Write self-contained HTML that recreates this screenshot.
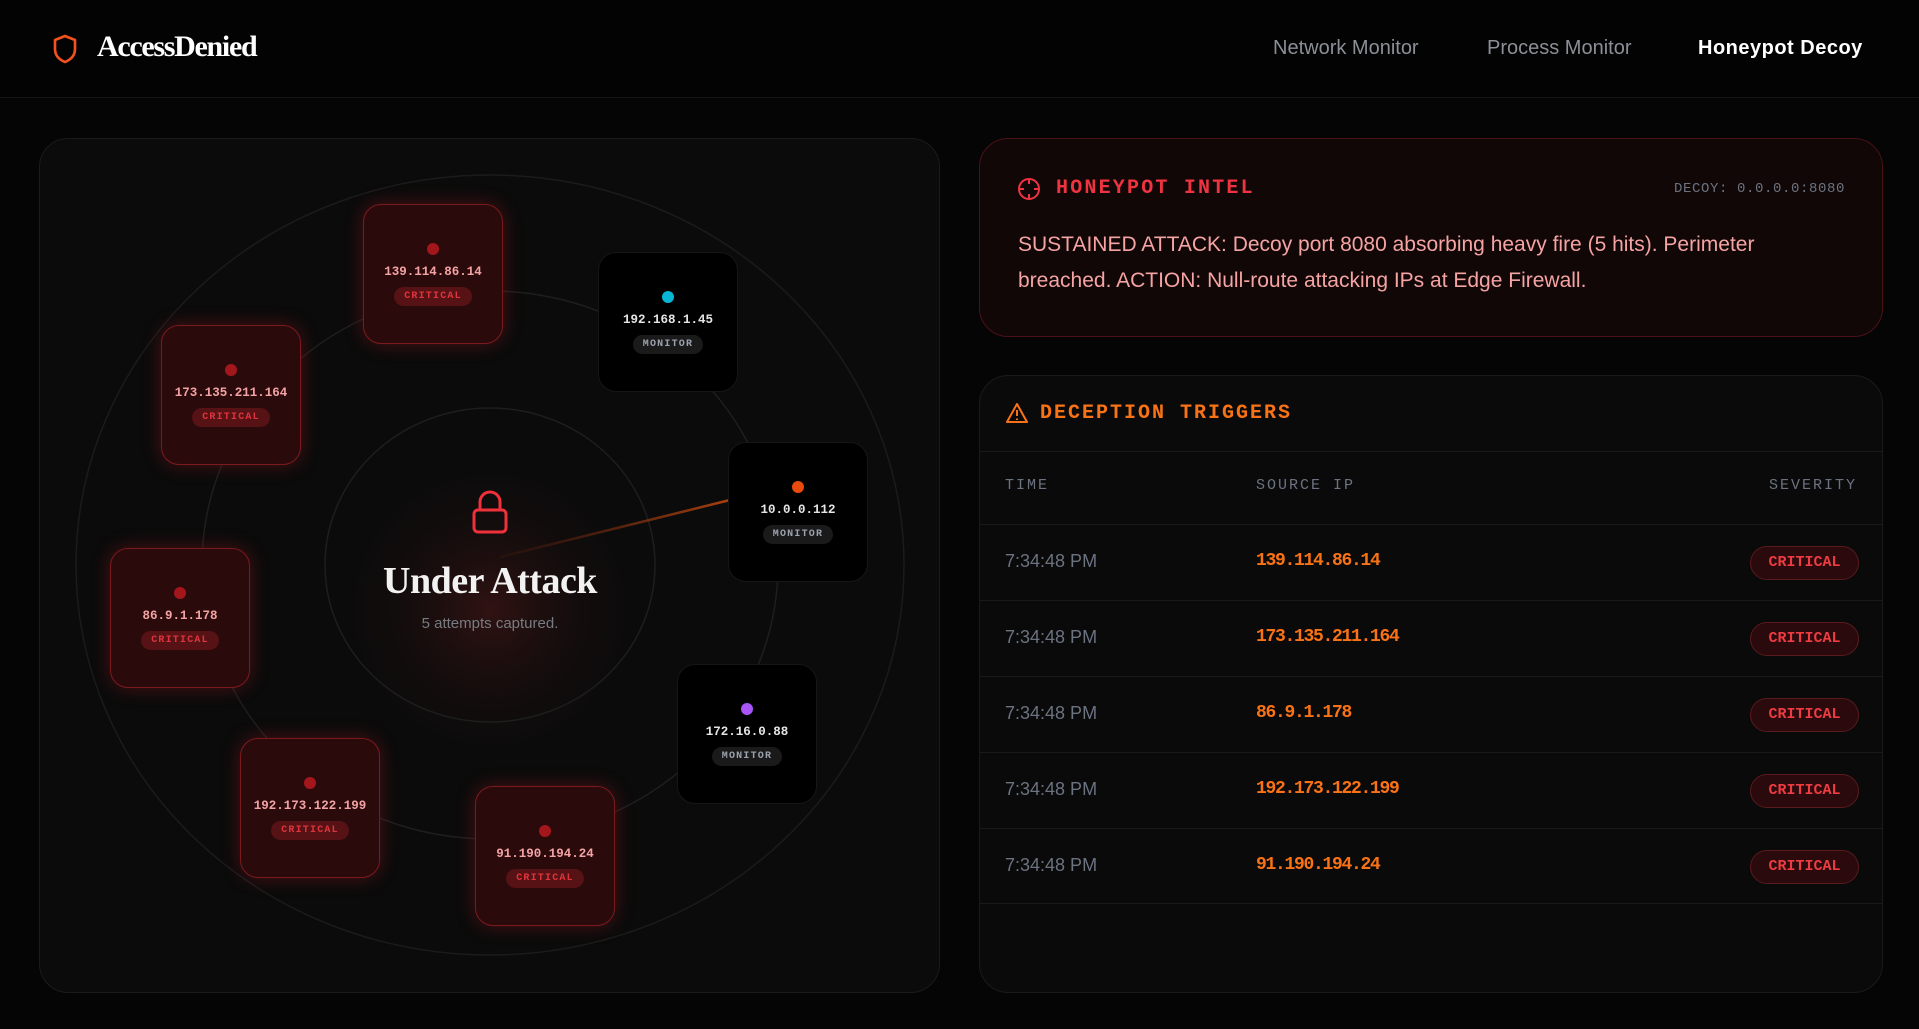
<!DOCTYPE html>
<html><head><meta charset="utf-8"><style>
*{margin:0;padding:0;box-sizing:border-box}
body{width:1919px;height:1029px;background:#050505;overflow:hidden;position:relative;font-family:"Liberation Sans",sans-serif;color:#fff}
.abs{position:absolute}
.mono{font-family:"Liberation Mono",monospace}
.hdr{left:0;top:0;width:1919px;height:98px;border-bottom:1px solid #161616;background:#030303}
.nav{top:37px;font-size:20px;color:#8b8f96}
.panel{left:39px;top:138px;width:901px;height:855px;background:#0b0b0b;border:1px solid #1b1b1b;border-radius:29px}
.node{position:absolute;width:140px;height:140px;border-radius:18px;text-align:center}
.crit{background:#2b0a0c;border:1.5px solid #7a1a1e;box-shadow:0 0 18px rgba(200,30,40,.35)}
.mon{background:#000;border:1px solid #161616}
.node .dot{width:12px;height:12px;border-radius:50%;margin:38px auto 0}
.node .ip{font-family:"Liberation Mono",monospace;font-weight:bold;font-size:12.5px;margin-top:10px}
.crit .ip{color:#f3a3a3}.mon .ip{color:#e5e5e5}
.node .bd{display:inline-block;margin-top:8px;font-family:"Liberation Mono",monospace;font-weight:bold;font-size:10px;letter-spacing:1.2px;padding:4px 10px;border-radius:10px}
.crit .bd{background:#561215;color:#e0343c}
.mon .bd{background:#1a1a1a;color:#9ca3af}
.card1{left:979px;top:138px;width:904px;height:199px;background:#110707;border:1px solid #4a1216;border-radius:29px}
.card2{left:979px;top:375px;width:904px;height:618px;background:#0a0a0a;border:1px solid #1a1a1a;border-radius:29px;overflow:hidden}
.row{position:absolute;left:0;width:904px;height:76px;border-top:1px solid #1a1a1a}
.row .t{position:absolute;left:25px;top:26px;font-size:18px;color:#6b7280}
.row .i{position:absolute;left:276px;top:26px;font-family:"Liberation Mono",monospace;font-weight:bold;font-size:18px;letter-spacing:-1.3px;color:#f97316}
.row .b{position:absolute;right:25px;top:21px;width:109px;height:34px;border-radius:17px;background:#2a0a0c;border:1px solid #5a1a1e;color:#ef3b42;font-family:"Liberation Mono",monospace;font-weight:bold;font-size:15px;text-align:center;line-height:32px}
</style></head><body>
<div class="abs hdr"></div>
<svg class="abs" style="left:52px;top:34px" width="26" height="30" viewBox="0 0 26 30"><path d="M13 2 L23 6 V15 C23 22 18 26 13 28 C8 26 3 22 3 15 V6 Z" fill="none" stroke="#f4511e" stroke-width="2.6" stroke-linejoin="round"/></svg>
<div class="abs" style="left:97px;top:30px;font-family:'Liberation Serif',serif;font-weight:bold;font-size:30px;letter-spacing:-1.3px;color:#fff">AccessDenied</div>
<div class="abs nav" style="left:1273px">Network Monitor</div>
<div class="abs nav" style="left:1487px">Process Monitor</div>
<div class="abs nav" style="left:1698px;color:#fff;font-weight:bold;letter-spacing:.5px">Honeypot Decoy</div>

<div class="abs panel"></div>
<svg class="abs" style="left:0;top:0" width="960" height="1029">
<defs>
<radialGradient id="g" cx="490" cy="610" r="170" gradientUnits="userSpaceOnUse"><stop offset="0" stop-color="#3a1414" stop-opacity=".8"/><stop offset="1" stop-color="#0b0b0b" stop-opacity="0"/></radialGradient>
<linearGradient id="l" x1="500" y1="557" x2="730" y2="500" gradientUnits="userSpaceOnUse"><stop offset="0" stop-color="#7a2a10" stop-opacity=".1"/><stop offset="1" stop-color="#a8400f"/></linearGradient>
</defs>
<ellipse cx="490" cy="565" rx="414" ry="390" fill="none" stroke="#1b1b1b" stroke-width="1.5"/>
<ellipse cx="490" cy="565" rx="288" ry="274" fill="none" stroke="#1e1e1e" stroke-width="1.5"/>
<circle cx="490" cy="610" r="170" fill="url(#g)"/>
<ellipse cx="490" cy="565" rx="165" ry="157" fill="none" stroke="#1e1e1e" stroke-width="1.5"/>
<line x1="500" y1="557" x2="730" y2="500" stroke="url(#l)" stroke-width="2.5"/>
<rect x="474" y="510" width="32" height="22" rx="4" fill="none" stroke="#f0303a" stroke-width="3"/>
<path d="M480 510 V502 A10 10 0 0 1 500 502 V510" fill="none" stroke="#f0303a" stroke-width="3"/>
</svg>
<div class="abs" style="left:290px;top:559px;width:400px;text-align:center;font-family:'Liberation Serif',serif;font-weight:bold;font-size:38px;color:#f2f2f2;letter-spacing:-.5px">Under Attack</div>
<div class="abs" style="left:290px;top:615px;width:400px;text-align:center;font-size:15px;color:#777b82">5 attempts captured.</div>

<div class="node crit" style="left:363px;top:204px"><div class="dot" style="background:#a3161c"></div><div class="ip">139.114.86.14</div><div class="bd">CRITICAL</div></div>
<div class="node mon" style="left:598px;top:252px"><div class="dot" style="background:#06b6d4"></div><div class="ip">192.168.1.45</div><div class="bd">MONITOR</div></div>
<div class="node mon" style="left:728px;top:442px"><div class="dot" style="background:#ea4a0c"></div><div class="ip">10.0.0.112</div><div class="bd">MONITOR</div></div>
<div class="node mon" style="left:677px;top:664px"><div class="dot" style="background:#a855f7"></div><div class="ip">172.16.0.88</div><div class="bd">MONITOR</div></div>
<div class="node crit" style="left:475px;top:786px"><div class="dot" style="background:#a3161c"></div><div class="ip">91.190.194.24</div><div class="bd">CRITICAL</div></div>
<div class="node crit" style="left:240px;top:738px"><div class="dot" style="background:#a3161c"></div><div class="ip">192.173.122.199</div><div class="bd">CRITICAL</div></div>
<div class="node crit" style="left:110px;top:548px"><div class="dot" style="background:#a3161c"></div><div class="ip">86.9.1.178</div><div class="bd">CRITICAL</div></div>
<div class="node crit" style="left:161px;top:325px"><div class="dot" style="background:#a3161c"></div><div class="ip">173.135.211.164</div><div class="bd">CRITICAL</div></div>

<div class="abs card1">
<svg class="abs" style="left:37px;top:38px" width="24" height="24" viewBox="0 0 24 24"><circle cx="12" cy="12" r="10" fill="none" stroke="#ef3340" stroke-width="2"/><path d="M12 2v5M12 17v5M2 12h5M17 12h5" stroke="#ef3340" stroke-width="2"/></svg>
<div class="abs mono" style="left:76px;top:38px;font-weight:bold;font-size:20px;letter-spacing:2.2px;color:#ef3340">HONEYPOT INTEL</div>
<div class="abs mono" style="right:37px;top:42px;font-size:14px;letter-spacing:.6px;color:#6b7280">DECOY: 0.0.0.0:8080</div>
<div class="abs" style="left:38px;top:88px;width:800px;font-size:21px;line-height:36px;color:#f5a3a3">SUSTAINED ATTACK: Decoy port 8080 absorbing heavy fire (5 hits). Perimeter breached. ACTION: Null-route attacking IPs at Edge Firewall.</div>
</div>

<div class="abs card2">
<svg class="abs" style="left:25px;top:26px" width="24" height="22" viewBox="0 0 24 22"><path d="M12 2 L22 20 H2 Z" fill="none" stroke="#f97316" stroke-width="2" stroke-linejoin="round"/><path d="M12 8v6M12 16.5v1.5" stroke="#f97316" stroke-width="2"/></svg>
<div class="abs mono" style="left:60px;top:26px;font-weight:bold;font-size:20px;letter-spacing:2px;color:#f97316">DECEPTION TRIGGERS</div>
<div class="abs" style="left:0;top:75px;width:904px;height:1px;background:#1a1a1a"></div>
<div class="abs mono" style="left:25px;top:101px;font-size:15px;letter-spacing:2px;color:#6b7280">TIME</div>
<div class="abs mono" style="left:276px;top:101px;font-size:15px;letter-spacing:2px;color:#6b7280">SOURCE IP</div>
<div class="abs mono" style="right:25px;top:101px;font-size:15px;letter-spacing:2px;color:#6b7280">SEVERITY</div>
<div class="row" style="top:148px"><div class="t">7:34:48 PM</div><div class="i">139.114.86.14</div><div class="b">CRITICAL</div></div>
<div class="row" style="top:224px"><div class="t">7:34:48 PM</div><div class="i">173.135.211.164</div><div class="b">CRITICAL</div></div>
<div class="row" style="top:300px"><div class="t">7:34:48 PM</div><div class="i">86.9.1.178</div><div class="b">CRITICAL</div></div>
<div class="row" style="top:376px"><div class="t">7:34:48 PM</div><div class="i">192.173.122.199</div><div class="b">CRITICAL</div></div>
<div class="row" style="top:452px;border-bottom:1px solid #1a1a1a"><div class="t">7:34:48 PM</div><div class="i">91.190.194.24</div><div class="b">CRITICAL</div></div>
</div>
</body></html>
